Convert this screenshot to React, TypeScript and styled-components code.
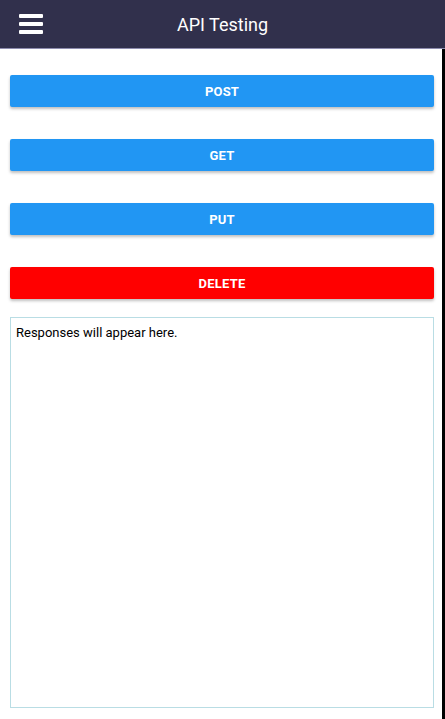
import React from "react";
import styled, { createGlobalStyle } from "styled-components";

const GlobalStyle = createGlobalStyle`
  html, body {
    margin: 0;
    padding: 0;
    background: #ffffff;
  }
  body {
    font-family: Roboto, "Liberation Sans", Arial, sans-serif;
  }
`;

const Screen = styled.div`
  width: 445px;
  height: 719px;
  display: flex;
  flex-direction: column;
  overflow: hidden;
`;

const Header = styled.div`
  height: 48px;
  flex-shrink: 0;
  background: #31304c;
  border-bottom: 1px solid #8d8cae;
  display: flex;
  align-items: center;
  position: relative;
`;

const MenuButton = styled.div`
  width: 24px;
  margin-left: 19px;
  display: flex;
  flex-direction: column;
  gap: 4px;
  margin-top: -1px;
`;

const MenuBar = styled.div`
  height: 4px;
  background: #ffffff;
  border-radius: 1px;
`;

const Title = styled.div`
  position: absolute;
  left: 0;
  right: 0;
  text-align: center;
  color: #ffffff;
  font-size: 18px;
  pointer-events: none;
  top: 14px;
`;

const Body = styled.div`
  flex: 1;
  display: flex;
  min-height: 0;
`;

const Content = styled.div`
  flex: 1;
  display: flex;
  flex-direction: column;
  padding: 26px 8px 11px 10px;
  min-height: 0;
`;

const EdgeStrip = styled.div`
  width: 3px;
  background: #000000;
`;

const ButtonList = styled.div`
  display: flex;
  flex-direction: column;
  gap: 32px;
`;

const ActionButton = styled.div<{ $danger?: boolean }>`
  height: 32px;
  border-radius: 2px;
  background: ${(p) => (p.$danger ? "#ff0000" : "#2196f3")};
  color: #ffffff;
  font-size: 13px;
  font-weight: 700;
  letter-spacing: 0.2px;
  text-transform: uppercase;
  display: flex;
  align-items: center;
  justify-content: center;
  box-shadow: 0 2px 3px rgba(0, 0, 0, 0.25);
`;

const ResponseBox = styled.div`
  margin-top: 18px;
  flex: 1;
  border: 1px solid #b9dde4;
  padding: 7px 5px;
  font-size: 13px;
  color: #000000;
`;

const methods = ["Post", "Get", "Put", "Delete"];

export default function App() {
  return (
    <>
      <GlobalStyle />
      <Screen>
        <Header>
          <MenuButton>
            <MenuBar />
            <MenuBar />
            <MenuBar />
          </MenuButton>
          <Title>API Testing</Title>
        </Header>
        <Body>
          <Content>
            <ButtonList>
              {methods.map((m) => (
                <ActionButton key={m} $danger={m === "Delete"}>
                  {m}
                </ActionButton>
              ))}
            </ButtonList>
            <ResponseBox>Responses will appear here.</ResponseBox>
          </Content>
          <EdgeStrip />
        </Body>
      </Screen>
    </>
  );
}
